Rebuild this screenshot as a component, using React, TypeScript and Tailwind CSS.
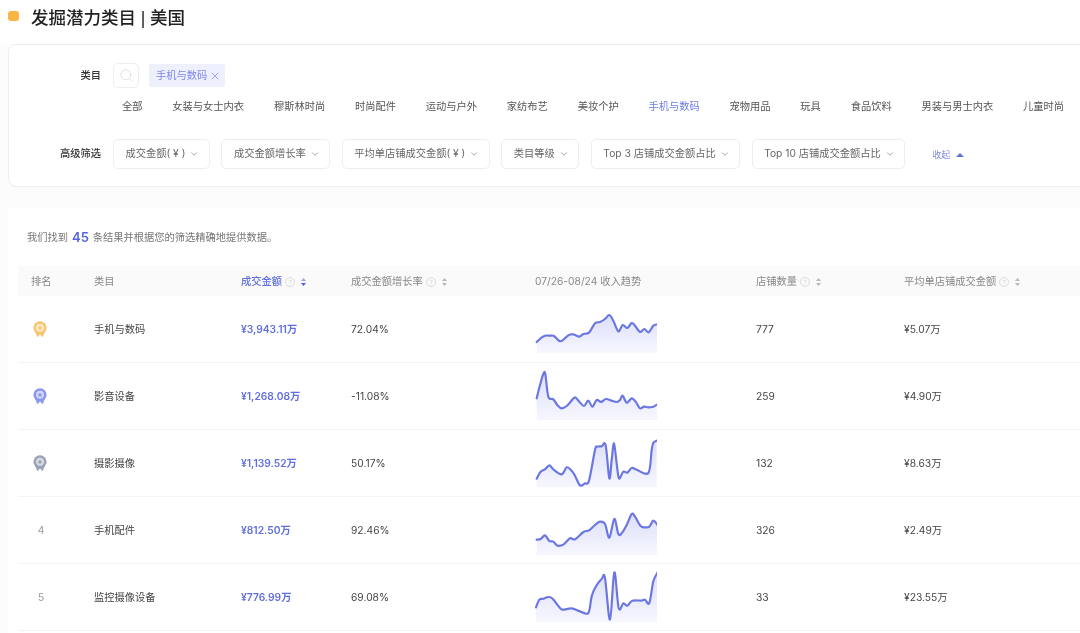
import { ChevronDown, Search, X } from 'lucide-react';

type Pt = [number, number];

interface Row {
  rank: number;
  name: string;
  amount: string;
  growth: string;
  stores: string;
  avg: string;
  box: string;
  bottom: number;
  points: Pt[];
}

const categories = ['全部', '女装与女士内衣', '穆斯林时尚', '时尚配件', '运动与户外', '家纺布艺', '美妆个护', '手机与数码', '宠物用品', '玩具', '食品饮料', '男装与男士内衣', '儿童时尚'];

const filters = ['成交金额( ¥ )', '成交金额增长率', '平均单店铺成交金额( ¥ )', '类目等级', 'Top 3 店铺成交金额占比', 'Top 10 店铺成交金额占比'];

const rows: Row[] = [
  {
    rank: 1, name: '手机与数码', amount: '¥3,943.11万', growth: '72.04%', stores: '777', avg: '¥5.07万',
    box: '45 3 366 168', bottom: 158,
    points: [[50,126],[62,115],[75,107],[90,107],[102,108],[118,123],[128,121],[145,106],[160,103],[178,110],[190,102],[207,98],[225,70],[240,66],[255,57],[268,45],[280,62],[295,94],[308,75],[322,84],[335,69],[345,77],[360,96],[373,87],[386,97],[400,77],[412,73]],
  },
  {
    rank: 2, name: '影音设备', amount: '¥1,268.08万', growth: '-11.08%', stores: '259', avg: '¥4.90万',
    box: '45 204 366 168', bottom: 360,
    points: [[50,295],[60,255],[70,222],[76,222],[85,290],[100,298],[112,315],[125,325],[140,318],[152,305],[165,292],[178,305],[192,318],[205,302],[217,320],[230,300],[243,306],[258,297],[275,302],[290,306],[300,300],[308,287],[320,308],[335,295],[347,305],[360,325],[372,320],[386,322],[400,320],[412,313]],
  },
  {
    rank: 3, name: '摄影摄像', amount: '¥1,139.52万', growth: '50.17%', stores: '132', avg: '¥8.63万',
    box: '45 15 366 168', bottom: 172,
    points: [[50,146],[62,125],[75,118],[88,106],[100,118],[125,133],[140,112],[155,122],[165,137],[180,166],[195,160],[207,152],[225,60],[232,50],[245,49],[257,46],[268,145],[275,90],[282,40],[290,100],[297,145],[310,125],[322,128],[335,114],[350,119],[385,129],[395,60],[400,38],[410,32]],
  },
  {
    rank: 4, name: '手机配件', amount: '¥812.50万', growth: '92.46%', stores: '326', avg: '¥2.49万',
    box: '45 216 366 168', bottom: 375,
    points: [[50,329],[62,327],[75,316],[88,333],[100,335],[113,347],[130,344],[150,325],[165,328],[190,306],[207,301],[225,285],[240,275],[255,282],[268,323],[283,267],[295,312],[305,310],[320,285],[335,252],[345,260],[362,288],[375,292],[388,290],[400,272],[412,284]],
  },
  {
    rank: 5, name: '监控摄像设备', amount: '¥776.99万', growth: '69.08%', stores: '33', avg: '¥23.55万',
    box: '45 418 366 168', bottom: 578,
    points: [[48,533],[58,510],[70,507],[85,502],[98,507],[120,535],[130,540],[155,536],[180,545],[205,550],[215,500],[228,470],[245,448],[255,445],[270,570],[283,428],[296,535],[310,521],[322,528],[337,513],[365,513],[375,510],[388,520],[400,455],[413,428]],
  },
];

// catmull-rom through the sampled points
function smooth(pts: Pt[]) {
  let d = `M${pts[0][0]} ${pts[0][1]}`;
  for (let i = 0; i < pts.length - 1; i++) {
    const p0 = pts[i - 1] || pts[i];
    const p1 = pts[i];
    const p2 = pts[i + 1];
    const p3 = pts[i + 2] || p2;
    const c1x = p1[0] + (p2[0] - p0[0]) / 6;
    const c1y = p1[1] + (p2[1] - p0[1]) / 6;
    const c2x = p2[0] - (p3[0] - p1[0]) / 6;
    const c2y = p2[1] - (p3[1] - p1[1]) / 6;
    d += ` C${c1x} ${c1y} ${c2x} ${c2y} ${p2[0]} ${p2[1]}`;
  }
  return d;
}

function Spark({ row }: { row: Row }) {
  const line = smooth(row.points);
  const first = row.points[0][0];
  const last = row.points[row.points.length - 1][0];
  const id = `spark-${row.rank}`;
  return (
    <svg width="122" height="56" viewBox={row.box} className="-mt-[2px] block">
      <defs>
        <linearGradient id={id} x1="0" y1="0" x2="0" y2="1">
          <stop offset="0%" stopColor="#dcdffa" />
          <stop offset="100%" stopColor="#f6f7fe" />
        </linearGradient>
      </defs>
      <path d={`${line} L${last} ${row.bottom} L${first} ${row.bottom} Z`} fill={`url(#${id})`} />
      <path d={line} fill="none" stroke="#6a76e2" strokeWidth="6.5" strokeLinejoin="round" strokeLinecap="round" />
    </svg>
  );
}

function Medal({ color }: { color: string }) {
  return (
    <svg width="14" height="16" viewBox="0 0 14 16" fill="none" className="-mt-[2px]">
      <path d="M3 10.5 L4.6 15 L6 13.2 M11 10.5 L9.4 15 L8 13.2" stroke={color} strokeWidth="1.6" strokeLinecap="round" strokeLinejoin="round" />
      <circle cx="7" cy="6.8" r="6.6" fill={color} />
      <circle cx="7" cy="6.8" r="4" fill="#ffffff" fillOpacity="0.6" />
      <circle cx="7" cy="7" r="1.7" fill={color} />
    </svg>
  );
}

function Help() {
  return (
    <svg width="10" height="10" viewBox="0 0 10 10" fill="none" className="shrink-0">
      <circle cx="5" cy="5" r="4.5" stroke="#d4d4d8" strokeWidth="0.8" />
      <path d="M3.8 4 C3.8 2.6 6.2 2.6 6.2 4 C6.2 4.9 5 4.9 5 5.9" stroke="#d4d4d8" strokeWidth="0.8" />
      <circle cx="5" cy="7.2" r="0.5" fill="#d4d4d8" />
    </svg>
  );
}

function Sort({ active }: { active?: boolean }) {
  return (
    <svg width="7" height="10" viewBox="0 0 7 10" className="ml-[2px] shrink-0">
      <path d="M3.5 1 L6 4 L1 4 Z" fill={active ? '#9aa3ec' : '#b8b8be'} />
      <path d="M3.5 9 L6 6 L1 6 Z" fill={active ? '#4f5fd8' : '#b8b8be'} />
    </svg>
  );
}

export default function App() {
  return (
    <div className="h-[633px] w-[1080px] overflow-hidden bg-[#fcfcfc] font-['Inter','Noto_Sans_CJK_SC',sans-serif] text-[10.25px] text-[#444] blur-[0.5px]">
      {/* Title */}
      <div className="flex h-[44px] w-full items-start bg-white pl-[8px] pt-[6px]">
        <span className="mt-[5px] h-[10px] w-[11px] rounded-[3px] bg-[#f8b545]" />
        <h1 className="ml-[12px] text-[17.5px] leading-[24px] font-medium text-[#222]">
          发掘潜力类目 <span className="font-['Liberation_Sans']">|</span> 美国
        </h1>
      </div>

      {/* Filters */}
      <div className="ml-[8px] h-[143px] w-[1100px] rounded-[8px] border border-[#eeeeee] bg-white pt-[18px]">
        <div className="flex items-center">
          <span className="w-[92px] text-right font-medium text-[#333]">类目</span>
          <span className="ml-[12px] flex h-[25px] w-[26px] items-center justify-center rounded-[5px] border border-[#eeeeee]">
            <Search size={15} strokeWidth={1} color="#d0d0d0" />
          </span>
          <span className="ml-[10px] flex h-[23px] w-[76px] items-center gap-[2px] rounded-[2px] bg-[#eef0fd] pl-[7px] text-[#7c88ea]">
            手机与数码
            <X size={12} strokeWidth={1.4} />
          </span>
        </div>
        <div className="mt-[10px] ml-[113px] flex gap-[29.8px] leading-[16px] whitespace-nowrap text-[#555]">
          {categories.map((c) => (
            <span key={c} className={c === '手机与数码' ? 'text-[#6f7ce6]' : ''}>{c}</span>
          ))}
        </div>
        <div className="mt-[25px] flex items-center">
          <span className="w-[92px] text-right font-medium text-[#333]">高级筛选</span>
          <div className="ml-[12px] flex gap-[11.5px]">
            {filters.map((f) => (
              <span key={f} className="flex h-[30px] items-center gap-[4px] rounded-[5px] border border-[#eeeeee] pr-[9.5px] pl-[11.5px] whitespace-nowrap text-[#666]">
                {f}
                <ChevronDown size={10} strokeWidth={1.6} color="#777" />
              </span>
            ))}
          </div>
          <span className="mt-[2px] ml-[27px] flex items-center gap-[6px] text-[9px] text-[#7f8be8]">
            收起
            <span className="h-0 w-0 border-x-[4px] border-b-[4px] border-x-transparent border-b-[#5f6fdc]" />
          </span>
        </div>
      </div>

      {/* Results */}
      <div className="mt-[21px] ml-[8px] h-[440px] w-[1100px] bg-white pl-[10px]">
        <div className="flex h-[58px] items-end pb-[21px] pl-[9px] text-[#777]">
          <span className="leading-[16px]">我们找到</span>
          <span className="mx-[4px] text-[13px] leading-[16px] font-semibold text-[#5565dc]">45</span>
          <span className="leading-[16px]">条结果并根据您的筛选精确地提供数据。</span>
        </div>
        <div className="grid h-[30px] grid-cols-[76px_147px_110px_184px_221px_148px_1fr] items-center bg-[#fafafa] pt-[2px] text-[#888]">
          <span className="pl-[13px]">排名</span>
          <span>类目</span>
          <span className="flex items-center gap-[3px] font-medium text-[#5f6fe0]">成交金额<Help /><Sort active /></span>
          <span className="flex items-center gap-[3px]">成交金额增长率<Help /><Sort /></span>
          <span>07/26-08/24 收入趋势</span>
          <span className="flex items-center gap-[3px]">店铺数量<Help /><Sort /></span>
          <span className="flex items-center gap-[3px]">平均单店铺成交金额<Help /><Sort /></span>
        </div>
        {rows.map((r) => (
          <div key={r.rank} className="grid h-[67px] grid-cols-[76px_147px_110px_184px_221px_148px_1fr] items-center border-b border-[#f3f3f5] pt-[2px] text-[#444]">
            <span className="flex pl-[15px]">
              {r.rank === 1 && <Medal color="#f6c56f" />}
              {r.rank === 2 && <Medal color="#8b96ec" />}
              {r.rank === 3 && <Medal color="#9ca2b8" />}
              {r.rank > 3 && <span className="w-[16px] text-center text-[#999]">{r.rank}</span>}
            </span>
            <span>{r.name}</span>
            <span className="font-semibold text-[#5f6fe0]">{r.amount}</span>
            <span>{r.growth}</span>
            <Spark row={r} />
            <span>{r.stores}</span>
            <span>{r.avg}</span>
          </div>
        ))}
      </div>
    </div>
  );
}
